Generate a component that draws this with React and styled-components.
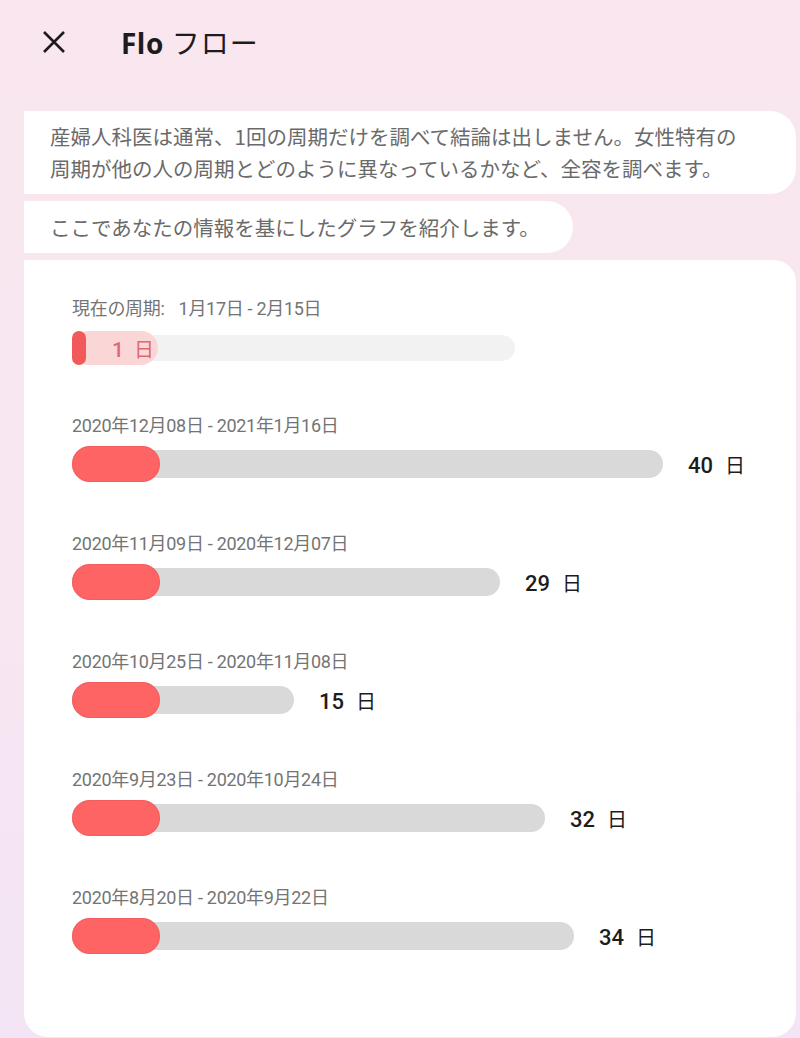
import React from 'react'
import styled, {createGlobalStyle} from 'styled-components'

const GlobalStyle = createGlobalStyle`
  html, body {
    margin: 0;
    padding: 0;
  }
  body {
    font-family: Roboto, "Noto Sans CJK JP", sans-serif;
    background: linear-gradient(180deg, #f9e6ef 0%, #f8e6f1 60%, #f3e5f5 100%);
    min-height: 1038px;
  }
`

const Page = styled.div`
  width: 800px;
  height: 1038px;
  display: flex;
  flex-direction: column;
  overflow: hidden;
`

const Header = styled.div`
  height: 84px;
  display: flex;
  align-items: center;
  padding-left: 40px;
  box-sizing: border-box;
`

const CloseButton = styled.div`
  width: 28px;
  height: 28px;
  display: flex;
  align-items: center;
  justify-content: center;
  margin-right: 53px;
`

const Title = styled.h1`
  margin: 0;
  font-family: "Noto Sans CJK JP", sans-serif;
  font-size: 28px;
  font-weight: 400;
  color: #1e1b1e;
  letter-spacing: 1px;
  b {
    font-family: "Open Sans", sans-serif;
    font-weight: 700;
    margin-right: 8px;
    letter-spacing: 0.5px;
  }
`

const Messages = styled.div`
  display: flex;
  flex-direction: column;
  align-items: flex-start;
  gap: 7px;
  margin-top: 27px;
  padding-left: 24px;
`

const Bubble = styled.div`
  background: #fff;
  border-radius: 0 26px 26px 0;
  padding: ${p => (p.$multi ? '9px 20px 10px 26px' : '10px 33px 10px 26px')};
  width: ${p => (p.$multi ? '772px' : 'auto')};
  box-sizing: border-box;
  font-family: "Noto Sans CJK JP", sans-serif;
  font-size: 20.5px;
  line-height: 32px;
  color: #6a6a6a;
`

const Card = styled.div`
  margin: 7px 4px 1px 24px;
  flex: 1;
  background: #fff;
  border-radius: 0 22px 24px 24px;
  padding: 37px 48px 0 48px;
  box-sizing: border-box;
  display: flex;
  flex-direction: column;
  gap: 50px;
`

const Row = styled.div`
  display: flex;
  flex-direction: column;
  gap: ${p => (p.$current ? '9px' : '8px')};
  margin-bottom: ${p => (p.$current ? '-2px' : '0')};
`

const RangeLabel = styled.div`
  font-family: Roboto, "Noto Sans CJK JP", sans-serif;
  font-size: 18px;
  color: #747474;
  height: 24px;
  line-height: 24px;
  letter-spacing: -0.3px;
  span {
    margin-right: 14px;
  }
`

const BarLine = styled.div`
  display: flex;
  align-items: center;
  height: 36px;
`

const Track = styled.div`
  position: relative;
  height: ${p => (p.$current ? '26px' : '28px')};
  border-radius: 14px;
  background: ${p => (p.$current ? '#f2f2f2' : '#d9d9d9')};
  flex-shrink: 0;
`

const Fill = styled.div`
  position: absolute;
  left: 0;
  top: -4px;
  width: 88px;
  height: 36px;
  border-radius: 18px;
  background: #ff6464;
  box-shadow: inset 0 0 0 1px rgba(220, 80, 80, 0.35);
`

const CurrentPill = styled.div`
  position: absolute;
  left: 0;
  top: -4px;
  width: 86px;
  height: 34px;
  border-radius: 17px;
  background: #fbd6d6;
  display: flex;
  align-items: center;
`

const CurrentMarker = styled.div`
  width: 14px;
  height: 34px;
  border-radius: 7px;
  background: #f25a5a;
  flex-shrink: 0;
`

const CurrentText = styled.div`
  margin-left: 26px;
  font-size: 21px;
  font-weight: 500;
  color: #dc6a74;
  font-family: Roboto, "Noto Sans CJK JP", sans-serif;
  span {
    font-weight: 400;
    margin-left: 10px;
    font-size: 20px;
  }
`

const Days = styled.div`
  margin-left: 25px;
  font-size: 22px;
  font-weight: 500;
  color: #1d1d1d;
  font-family: Roboto, "Noto Sans CJK JP", sans-serif;
  span {
    font-weight: 400;
    margin-left: 12px;
    font-size: 20px;
  }
`

const CloseIcon = () => (
  <svg width="24" height="24" viewBox="0 0 24 24">
    <path d="M2 2 L22 22 M22 2 L2 22" stroke="#1e1b1e" strokeWidth="2.6" strokeLinecap="butt" />
  </svg>
)

const cycles = [
  {range: '2020年12月08日 - 2021年1月16日', days: 40},
  {range: '2020年11月09日 - 2020年12月07日', days: 29},
  {range: '2020年10月25日 - 2020年11月08日', days: 15},
  {range: '2020年9月23日 - 2020年10月24日', days: 32},
  {range: '2020年8月20日 - 2020年9月22日', days: 34},
]

const DAY_PX = 14.77

export default function App() {
  return (
    <Page>
      <GlobalStyle />
      <Header>
        <CloseButton>
          <CloseIcon />
        </CloseButton>
        <Title>
          <b>Flo</b>フロー
        </Title>
      </Header>

      <Messages>
        <Bubble $multi>
          産婦人科医は通常、1回の周期だけを調べて結論は出しません。女性特有の
          <br />
          周期が他の人の周期とどのように異なっているかなど、全容を調べます。
        </Bubble>
        <Bubble>ここであなたの情報を基にしたグラフを紹介します。</Bubble>
      </Messages>

      <Card>
        <Row $current>
          <RangeLabel>
            <span>現在の周期:</span>1月17日 - 2月15日
          </RangeLabel>
          <BarLine>
            <Track $current style={{width: 443}}>
              <CurrentPill>
                <CurrentMarker />
                <CurrentText>
                  1<span>日</span>
                </CurrentText>
              </CurrentPill>
            </Track>
          </BarLine>
        </Row>

        {cycles.map(c => (
          <Row key={c.range}>
            <RangeLabel>{c.range}</RangeLabel>
            <BarLine>
              <Track style={{width: Math.round(c.days * DAY_PX)}}>
                <Fill />
              </Track>
              <Days>
                {c.days}
                <span>日</span>
              </Days>
            </BarLine>
          </Row>
        ))}
      </Card>
    </Page>
  )
}
